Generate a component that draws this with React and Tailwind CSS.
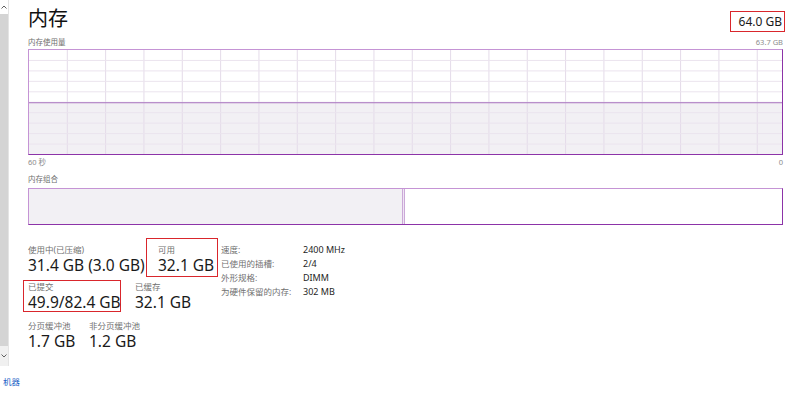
import React from 'react';

const VLINES = Array.from({ length: 19 }, (_, i) => 38.3 + i * 38.33);
const HLINES = Array.from({ length: 9 }, (_, i) => 10.45 * (i + 1));

/**
 * Scrollbar strip on the left edge of the pane
 */
function Scrollbar() {
  return (
    <div className="w-[9px] h-[366px] border-r border-[#e4e4e4] flex flex-col">
      <div className="h-[14px] flex items-center justify-center">
        <svg width="6" height="4" viewBox="0 0 6 4">
          <polyline points="0.5,3.5 3,1 5.5,3.5" fill="none" stroke="#606060" strokeWidth="1" />
        </svg>
      </div>
      <div className="flex-1 bg-[#d4d4d4]" />
      <div className="h-[20px] flex items-center justify-center bg-[#f0f0f0]">
        <svg width="6" height="4" viewBox="0 0 6 4">
          <polyline points="0.5,0.5 3,3 5.5,0.5" fill="none" stroke="#606060" strokeWidth="1" />
        </svg>
      </div>
    </div>
  );
}

/**
 * Memory usage history chart, 60 seconds of samples
 */
function UsageChart({ level }) {
  const y = 104 * (1 - level);
  return (
    <div className="h-[106px] border border-t-[#c594d5] border-l-[#c594d5] border-r-[#8c33a8] border-b-[#8c33a8]">
      <svg width="100%" height="104" viewBox="0 0 753 104" preserveAspectRatio="none" className="block">
        <rect x="0" y={y} width="753" height={104 - y} fill="#f2f0f4" />
        {VLINES.map((x) => (
          <line key={x} x1={x} y1="0" x2={x} y2="104" stroke="#e4dbe9" strokeWidth="1" />
        ))}
        {HLINES.map((h) => (
          <line key={h} x1="0" y1={h} x2="753" y2={h} stroke="#ebe4ee" strokeWidth="1" />
        ))}
        <line x1="0" y1={y} x2="753" y2={y} stroke="#a874bf" strokeWidth="1" />
      </svg>
    </div>
  );
}

/**
 * Memory composition bar (in use / modified / standby+free)
 */
function CompositionBar() {
  return (
    <div className="h-[37px] flex border border-t-[#c594d5] border-l-[#c594d5] border-r-[#8c33a8] border-b-[#8c33a8]">
      <div className="w-[373px] bg-[#f2f0f4]" />
      <div className="w-[3px] border-l border-r border-[#cba8d8] bg-[#efe6f3]" />
      <div className="flex-1 bg-white" />
    </div>
  );
}

function Stat({ label, value, className = '' }) {
  return (
    <div className={className}>
      <p className="text-[8.5px] leading-[11px] text-[#707070] mb-[1px] whitespace-nowrap">{label}</p>
      <p className="text-[15.5px] leading-[18px] text-[#1a1a1a] whitespace-nowrap">{value}</p>
    </div>
  );
}

const SPECS = [
  ['速度:', '2400 MHz'],
  ['已使用的插槽:', '2/4'],
  ['外形规格:', 'DIMM'],
  ['为硬件保留的内存:', '302 MB'],
];

export default function App() {
  return (
    <div className="w-[800px] h-[399px] bg-white overflow-hidden flex flex-col font-['Noto_Sans','Noto_Sans_CJK_SC',sans-serif]">
      <div className="h-[372px] flex">
        <Scrollbar />

        <main className="flex-1 pl-[19px] pr-[17px] flex flex-col">
          {/* Header: title + total capacity */}
          <div className="h-[37px] flex justify-between items-start">
            <h1 className="mt-[9px] text-[20px] leading-[20px] text-[#111]">内存</h1>
            <div className="mt-[11px] -mr-[2px] w-[55px] h-[21px] flex items-center justify-end pr-[2px] border border-[#d9262c] text-[12px] text-[#1a1a1a]">
              64.0 GB
            </div>
          </div>

          <div className="flex justify-between text-[7.5px] leading-[10px]">
            <span className="text-[#6e6e6e]">内存使用量</span>
            <span className="text-[#8c8c8c]">63.7 GB</span>
          </div>

          <div className="mt-[2px]">
            <UsageChart level={31.4 / 63.7} />
          </div>

          <div className="mt-[2px] flex justify-between text-[7.5px] leading-[10px] text-[#8c8c8c]">
            <span>60 秒</span>
            <span>0</span>
          </div>

          <p className="mt-[7px] text-[7.5px] leading-[10px] text-[#6e6e6e]">内存组合</p>

          <div className="mt-[4px]">
            <CompositionBar />
          </div>

          {/* Stats */}
          <div className="mt-[13px] flex">
            <div className="w-[193px] flex flex-col">
              <div className="flex items-start">
                <Stat className="w-[118px] pt-[6px]" label="使用中(已压缩)" value="31.4 GB (3.0 GB)" />
                <Stat className="w-[72px] pl-[11px] pt-[5px] pb-[2px] border border-[#d9262c]" label="可用" value="32.1 GB" />
              </div>
              <div className="mt-[3px] flex items-start">
                <Stat className="-ml-[5px] w-[98px] pl-[4px] border border-[#d9262c]" label="已提交" value="49.9/82.4 GB" />
                <Stat className="ml-[14px] pt-[1px]" label="已缓存" value="32.1 GB" />
              </div>
              <div className="mt-[8px] flex items-start">
                <Stat className="w-[61px]" label="分页缓冲池" value="1.7 GB" />
                <Stat label="非分页缓冲池" value="1.2 GB" />
              </div>
            </div>

            <div className="pt-[5px] flex flex-col">
              {SPECS.map(([k, v]) => (
                <div key={k} className="flex h-[14px] items-center">
                  <span className="w-[82px] text-[8.5px] text-[#707070] whitespace-nowrap">{k}</span>
                  <span className="text-[9px] text-[#1e1e1e] whitespace-nowrap">{v}</span>
                </div>
              ))}
            </div>
          </div>
        </main>
      </div>

      <p className="pt-[4px] pl-[3px] text-[8.5px] leading-[11px] text-[#1a62c6] whitespace-nowrap">机器</p>
    </div>
  );
}
